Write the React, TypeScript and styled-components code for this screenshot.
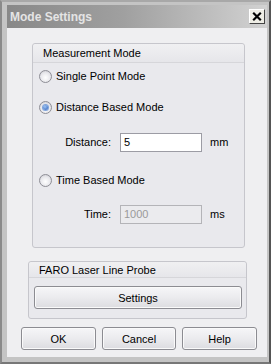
import React from 'react';
import styled, { createGlobalStyle } from 'styled-components';

const GlobalStyle = createGlobalStyle`
  html, body {
    margin: 0;
    padding: 0;
    background: #2a2a2a;
  }
  body {
    font-family: 'Liberation Sans', Arial, sans-serif;
    font-size: 11px;
    color: #000;
  }
`;

const Window = styled.div`
  width: 271px;
  height: 364px;
  box-sizing: border-box;
  background: #c4c4c4;
  border-left: 2px solid #8a8a8a;
  border-top: 2px solid #a8a8a8;
  border-right: 2px solid #555;
  border-bottom: 2px solid #777;
  padding: 3px 2px 5px 5px;
  display: flex;
  flex-direction: column;
`;

const TitleBar = styled.div`
  height: 23px;
  flex: none;
  display: flex;
  align-items: center;
  justify-content: space-between;
  padding: 0 2px 0 3px;
  background: linear-gradient(to right, #888 0%, #a0a0a0 45%, #d2d2d2 100%);
`;

const TitleText = styled.span`
  font-weight: bold;
  font-size: 12px;
  color: #e4e4e4;
`;

const CloseButton = styled.div`
  width: 16px;
  height: 15px;
  box-sizing: border-box;
  background: #eeede5;
  border: 1px solid;
  border-color: #fff #444 #444 #fff;
  display: flex;
  align-items: center;
  justify-content: center;
`;

const Client = styled.div`
  flex: 1;
  background: #efeff1;
  display: flex;
  flex-direction: column;
  padding-top: 15px;
`;

const Group = styled.div<{ $ml: number; $mr: number }>`
  margin: 0 ${({ $mr }) => $mr}px 0 ${({ $ml }) => $ml}px;
  border: 1px solid #c6c6cc;
  border-radius: 3px;
  background: #e9e9ed;
  display: flex;
  flex-direction: column;
`;

const GroupHeader = styled.div<{ $h: number }>`
  height: ${({ $h }) => $h}px;
  box-sizing: border-box;
  border-bottom: 1px solid #d6d6da;
  background: linear-gradient(#f0f0f2, #e6e6ea);
  display: flex;
  align-items: center;
  padding-left: 10px;
  font-size: 11px;
  border-radius: 3px 3px 0 0;
`;

const GroupBody = styled.div<{ $h: number }>`
  height: ${({ $h }) => $h}px;
  display: flex;
  flex-direction: column;
`;

const RadioRow = styled.div<{ $mt: number }>`
  display: flex;
  align-items: center;
  gap: 4px;
  margin: ${({ $mt }) => $mt}px 0 0 6px;
  height: 14px;
`;

const RadioCircle = styled.span<{ $on?: boolean }>`
  width: 13px;
  height: 13px;
  box-sizing: border-box;
  border-radius: 50%;
  border: 1px solid #8e8e96;
  background: radial-gradient(circle at 50% 60%, #ffffff 0%, #e8e8ec 55%, #c4c4ca 100%);
  display: flex;
  align-items: center;
  justify-content: center;
  &::after {
    content: '';
    display: ${({ $on }) => ($on ? 'block' : 'none')};
    width: 5px;
    height: 5px;
    border-radius: 50%;
    background: radial-gradient(circle at 40% 35%, #9cc4f4, #2a5cb8);
    box-shadow: 0 0 0 1px #7fa4dc;
  }
`;

const FieldRow = styled.div<{ $mt: number }>`
  display: flex;
  align-items: center;
  margin: ${({ $mt }) => $mt}px 0 0 0;
  height: 20px;
`;

const FieldLabel = styled.span`
  width: 87px;
  padding-right: 9px;
  box-sizing: border-box;
  text-align: right;
`;

const TextBox = styled.div<{ $disabled?: boolean }>`
  width: 82px;
  height: 19px;
  box-sizing: border-box;
  border: 1px solid ${({ $disabled }) => ($disabled ? '#b4b4b8' : '#9c9ca4')};
  background: ${({ $disabled }) => ($disabled ? '#ebebee' : '#fff')};
  color: ${({ $disabled }) => ($disabled ? '#9a9a9a' : '#000')};
  display: flex;
  align-items: center;
  padding-left: 3px;
`;

const Unit = styled.span`
  margin-left: 8px;
`;

const PushButton = styled.div<{ $w: number }>`
  width: ${({ $w }) => $w}px;
  height: 23px;
  box-sizing: border-box;
  border: 1px solid #8c8c92;
  border-radius: 3px;
  background: linear-gradient(#f6f6f8 0%, #ebebee 50%, #dcdce0 100%);
  box-shadow: inset 0 0 0 1px #fafafa;
  display: flex;
  align-items: center;
  justify-content: center;
  font-size: 11px;
`;

const SettingsWrap = styled.div`
  padding: 8px 5px 9px 5px;
`;

const Spacer = styled.div`
  height: 13px;
`;

const ButtonRow = styled.div`
  display: flex;
  gap: 6px;
  margin: 8px 0 0 14px;
`;

const CloseIcon = () => (
  <svg width="10" height="9" viewBox="0 0 10 9">
    <path d="M1.2 0.8 L8.8 8.2 M8.8 0.8 L1.2 8.2" stroke="#000" strokeWidth="2.2" />
  </svg>
);

export default function App() {
  return (
    <>
      <GlobalStyle />
      <Window>
        <TitleBar>
          <TitleText>Mode Settings</TitleText>
          <CloseButton>
            <CloseIcon />
          </CloseButton>
        </TitleBar>
        <Client>
          <Group $ml={25} $mr={22}>
            <GroupHeader $h={19}>Measurement Mode</GroupHeader>
            <GroupBody $h={184}>
              <RadioRow $mt={6}>
                <RadioCircle />
                Single Point Mode
              </RadioRow>
              <RadioRow $mt={17}>
                <RadioCircle $on />
                Distance Based Mode
              </RadioRow>
              <FieldRow $mt={18}>
                <FieldLabel>Distance:</FieldLabel>
                <TextBox>5</TextBox>
                <Unit>mm</Unit>
              </FieldRow>
              <RadioRow $mt={21}>
                <RadioCircle />
                Time Based Mode
              </RadioRow>
              <FieldRow $mt={17}>
                <FieldLabel>Time:</FieldLabel>
                <TextBox $disabled>1000</TextBox>
                <Unit>ms</Unit>
              </FieldRow>
            </GroupBody>
          </Group>
          <Spacer />
          <Group $ml={21} $mr={20}>
            <GroupHeader $h={16}>FARO Laser Line Probe</GroupHeader>
            <SettingsWrap>
              <PushButton $w={208}>Settings</PushButton>
            </SettingsWrap>
          </Group>
          <ButtonRow>
            <PushButton $w={75}>OK</PushButton>
            <PushButton $w={74}>Cancel</PushButton>
            <PushButton $w={75}>Help</PushButton>
          </ButtonRow>
        </Client>
      </Window>
    </>
  );
}
